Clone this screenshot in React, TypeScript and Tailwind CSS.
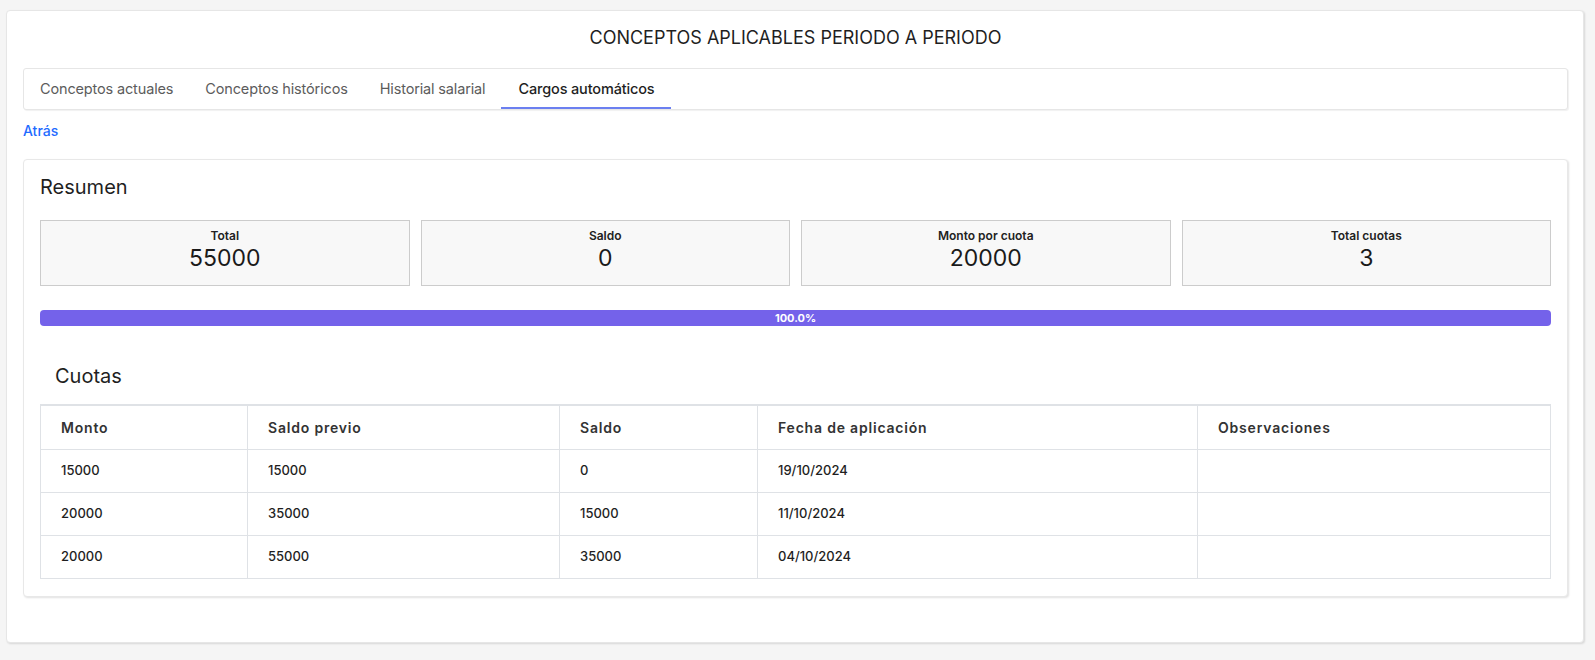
import React from "react";

const tabs = ["Conceptos actuales", "Conceptos históricos", "Historial salarial", "Cargos automáticos"];
const stats = [
  { label: "Total", value: "55000" },
  { label: "Saldo", value: "0" },
  { label: "Monto por cuota", value: "20000" },
  { label: "Total cuotas", value: "3" },
];
const rows = [
  ["15000", "15000", "0", "19/10/2024", ""],
  ["20000", "35000", "15000", "11/10/2024", ""],
  ["20000", "55000", "35000", "04/10/2024", ""],
];
const headers = ["Monto", "Saldo previo", "Saldo", "Fecha de aplicación", "Observaciones"];

export default function App() {
  const pct = 100;
  return (
    <div
      className="min-h-[660px] bg-[#f5f5f5] pl-[6px] pr-[11px] pt-[10px] pb-[17px]"
      style={{ fontFamily: "Inter, 'Noto Sans', 'Liberation Sans', sans-serif" }}
    >
      <div className="h-[633px] rounded-[4px] border border-[#e6e6e6] bg-white pl-[16px] pr-[15px] pt-[16px] shadow-[1px_1px_2px_rgba(0,0,0,0.12)]">
        <h1 className="text-center text-[18px] leading-[22px] font-normal text-[#1f1f1f]">
          CONCEPTOS APLICABLES PERIODO A PERIODO
        </h1>

        <div className="mt-[19px] flex h-[42px] rounded-[3px] border border-[#e6e6e6] bg-white shadow-[1px_1px_1px_rgba(0,0,0,0.06)]">
          {tabs.map((t, i) => {
            const active = i === tabs.length - 1;
            return (
              <div
                key={t}
                className={
                  "flex h-full items-center px-[16px] text-[14.5px] tracking-[-0.15px] " +
                  (active
                    ? "border-b-[2px] border-[#6b7ff0] pt-[2px] pl-[17px] font-medium text-[#1f1f1f]"
                    : "text-[#5c5c5c]")
                }
              >
                {t}
              </div>
            );
          })}
        </div>

        <div className="mt-[11px] text-[14px] leading-[20px] font-medium text-[#1f6bff]">Atrás</div>

        <div className="mt-[18px] h-[438px] rounded-[4px] border border-[#e8e8e8] bg-white px-[16px] pt-[15px] shadow-[1px_1px_2px_rgba(0,0,0,0.12)]">
          <h2 className="text-[20px] leading-[24px] font-normal text-[#1f1f1f]">Resumen</h2>

          <div className="mt-[21px] grid grid-cols-4 gap-[11px]">
            {stats.map((s) => (
              <div
                key={s.label}
                className="flex h-[66px] flex-col items-center border border-[#cccccc] bg-[#f8f8f8] pt-[7px]"
              >
                <div className="text-[12px] leading-[16px] font-semibold text-[#222]">{s.label}</div>
                <div className="text-[23px] leading-[28px] font-normal text-[#1a1a1a]">{s.value}</div>
              </div>
            ))}
          </div>

          <div className="mt-[24px] h-[16px] w-full overflow-hidden rounded-[4px] bg-[#e9ecef]">
            <div
              className="flex h-full items-center justify-center bg-[#7462ea] text-[11px] font-bold text-white"
              style={{ width: `${pct}%` }}
            >
              100.0%
            </div>
          </div>

          <h3 className="mt-[38px] pl-[15px] text-[20px] leading-[24px] font-normal text-[#1f1f1f]">Cuotas</h3>

          <table className="mt-[16px] w-full table-fixed border-collapse border-t-[2px] border-[#dfe2e6] text-[#222]">
            <colgroup>
              <col className="w-[207px]" />
              <col className="w-[312px]" />
              <col className="w-[198px]" />
              <col className="w-[440px]" />
              <col />
            </colgroup>
            <thead>
              <tr className="h-[44px]">
                {headers.map((h) => (
                  <th
                    key={h}
                    className="border border-t-0 border-[#dfe2e6] px-[20px] text-left text-[14px] font-semibold tracking-[0.8px] text-[#333]"
                  >
                    {h}
                  </th>
                ))}
              </tr>
            </thead>
            <tbody>
              {rows.map((r, i) => (
                <tr key={i} className="h-[43px]">
                  {r.map((c, j) => (
                    <td
                      key={j}
                      className="border border-[#dfe2e6] px-[20px] text-[13px] font-medium text-[#1f1f1f]"
                    >
                      {c}
                    </td>
                  ))}
                </tr>
              ))}
            </tbody>
          </table>
        </div>
      </div>
    </div>
  );
}
